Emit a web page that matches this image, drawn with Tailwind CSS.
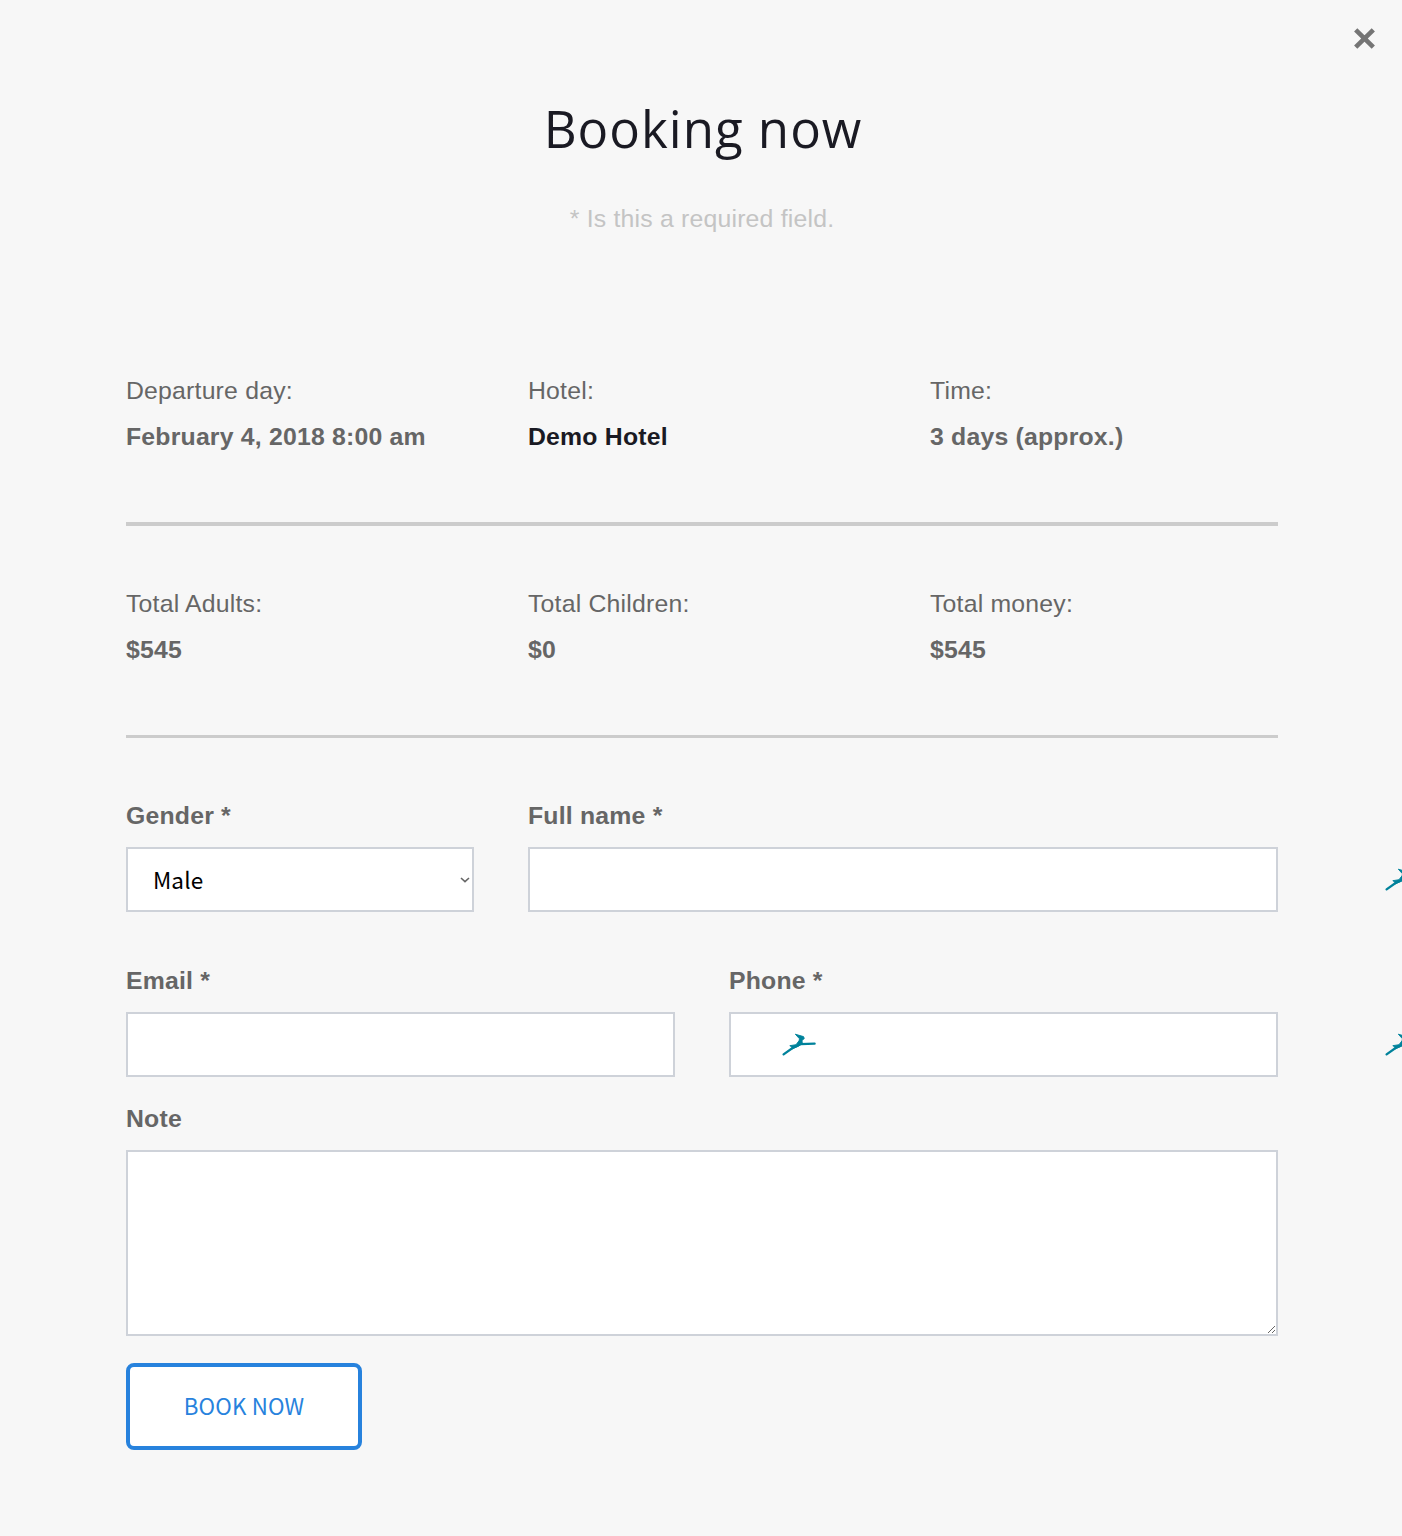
<!DOCTYPE html>
<html lang="en">
<head>
<meta charset="utf-8">
<title>Booking now</title>
<script src="https://cdn.jsdelivr.net/npm/@tailwindcss/browser@4"></script>
</head>
<body class="relative h-[1536px] overflow-hidden bg-[#f7f7f7] px-[126px] pr-[124px] font-['Liberation_Sans',Arial,sans-serif] text-[24.8px] leading-[46px] tracking-[0.2px] text-[#666]">
<svg width="0" height="0" class="absolute">
  <symbol id="bird" viewBox="0 0 34 23">
    <path d="M1.6 21.4 L10.5 15 L18.5 11.2 L32.6 10.6" fill="none" stroke="#00829b" stroke-width="2.3" stroke-linecap="round"/>
    <path d="M7.8 12.7 L14 11.7 L17 7.8 L17.5 5.8 L13.3 1.2 L21.5 3.6 L22.3 5.5 L20 7.5 L20.3 10.5 L16 13.4 L10 16 L10 14Z" fill="#00829b" stroke="#00829b" stroke-width=".9"/>
  </symbol>
</svg>
<button aria-label="Close" class="absolute top-[28px] left-[1353px] h-[22px] w-[23px]">
  <svg viewBox="0 0 23 22" class="block h-[22px] w-[23px]"><path d="M2.7 1.8 L20.3 19.2 M20.3 1.8 L2.7 19.2" fill="none" stroke="#757575" stroke-width="4.6"/></svg>
</button>
<header class="pt-[95px] text-center">
  <h1 class="h-[70px] pl-[2px] font-['Open_Sans',sans-serif] text-[51px] leading-[67px] font-normal tracking-[1px] text-[#1a1a23]">Booking now</h1>
  <p class="mt-[31px] text-[#c4c4c4]">* Is this a required field.</p>
</header>
<section class="mt-[126px] grid h-[158px] grid-cols-[402px_402px_1fr] border-b-4 border-[#ccc]">
  <div>Departure day:<br><b>February 4, 2018 8:00 am</b></div>
  <div>Hotel:<br><b class="text-[#1a1a23]">Demo Hotel</b></div>
  <div>Time:<br><b>3 days (approx.)</b></div>
</section>
<section class="mt-[55px] grid h-[157px] grid-cols-[402px_402px_1fr] border-b-3 border-[#ccc]">
  <div>Total Adults:<br><b>$545</b></div>
  <div>Total Children:<br><b>$0</b></div>
  <div>Total money:<br><b>$545</b></div>
</section>
<form>
  <div class="mt-[55px] grid grid-cols-[348px_750px] gap-[54px] font-bold">
    <label class="block">Gender *
      <span class="relative mt-[8px] flex h-[65px] items-center border-2 border-[#ced2d9] bg-white pb-[2px] pl-[25px] font-['Noto_Sans_CJK_JP',sans-serif] text-[22.5px] font-normal tracking-[0.1px] text-black">Male
        <svg viewBox="0 0 10 6" class="absolute top-[28px] right-[2px] h-[6px] w-[10px]"><path d="M1 1 L5 4.6 L9 1" fill="none" stroke="#666" stroke-width="1.6"/></svg>
      </span>
    </label>
    <label class="block">Full name *
      <input class="mt-[8px] block h-[65px] w-full border-2 border-[#ced2d9] bg-white px-6">
    </label>
  </div>
  <div class="mt-[46px] grid grid-cols-[549px_549px] gap-[54px] font-bold">
    <label class="block">Email *
      <input class="mt-[8px] block h-[65px] w-full border-2 border-[#ced2d9] bg-white px-6">
    </label>
    <label class="relative block">Phone *
      <input class="mt-[8px] block h-[65px] w-full border-2 border-[#ced2d9] bg-white px-6">
      <svg class="absolute top-[75px] left-[53px] h-[23px] w-[34px]"><use href="#bird"/></svg>
    </label>
  </div>
  <label class="mt-[19px] block font-bold">Note
    <textarea class="mt-[8px] block h-[186px] w-full resize-y border-2 border-[#ced2d9] bg-white"></textarea>
  </label>
  <button type="button" class="mt-[27px] block h-[87px] w-[236px] rounded-[8px] border-4 border-[#2782dd] bg-white pb-[3px] font-['Noto_Sans_CJK_JP',sans-serif] text-[22.3px] tracking-[0.15px] text-[#2782dd]">BOOK NOW</button>
</form>
<svg class="absolute top-[868px] left-[1385px] h-[23px] w-[34px]"><use href="#bird"/></svg>
<svg class="absolute top-[1033px] left-[1385px] h-[23px] w-[34px]"><use href="#bird"/></svg>
</body>
</html>
